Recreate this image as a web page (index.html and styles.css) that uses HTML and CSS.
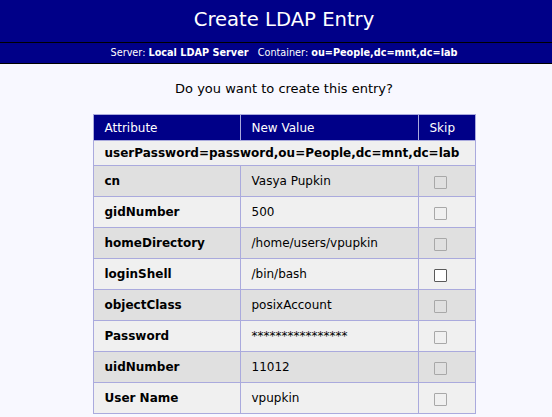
FILE: index.html
```html
<!DOCTYPE html>
<html>
<head>
<meta charset="utf-8">
<link rel="stylesheet" href="styles.css">
</head>
<body>
<div class="title">Create LDAP Entry</div>
<div class="subtitle">Server: <b>Local LDAP Server</b> &nbsp; Container: <b>ou=People,dc=mnt,dc=lab</b></div>
<div class="content">
  <p class="question">Do you want to create this entry?</p>
  <table class="entry">
    <thead>
      <tr><th class="c-attr">Attribute</th><th class="c-val">New Value</th><th class="c-skip">Skip</th></tr>
    </thead>
    <tbody>
      <tr class="dn"><td colspan="3">userPassword=password,ou=People,dc=mnt,dc=lab</td></tr>
      <tr class="dark"><td class="attr">cn</td><td>Vasya Pupkin</td><td class="skip"><input type="checkbox" disabled></td></tr>
      <tr class="light"><td class="attr">gidNumber</td><td>500</td><td class="skip"><input type="checkbox" disabled></td></tr>
      <tr class="dark"><td class="attr">homeDirectory</td><td>/home/users/vpupkin</td><td class="skip"><input type="checkbox" disabled></td></tr>
      <tr class="light"><td class="attr">loginShell</td><td>/bin/bash</td><td class="skip"><input type="checkbox"></td></tr>
      <tr class="dark"><td class="attr">objectClass</td><td>posixAccount</td><td class="skip"><input type="checkbox" disabled></td></tr>
      <tr class="light"><td class="attr">Password</td><td class="pw">****************</td><td class="skip"><input type="checkbox" disabled></td></tr>
      <tr class="dark"><td class="attr">uidNumber</td><td>11012</td><td class="skip"><input type="checkbox" disabled></td></tr>
      <tr class="light"><td class="attr">User Name</td><td>vpupkin</td><td class="skip"><input type="checkbox" disabled></td></tr>
    </tbody>
  </table>
</div>
</body>
</html>
```
FILE: styles.css
```css
html, body {
  margin: 0;
  padding: 0;
  background: #f8f8ff;
  font-family: "DejaVu Sans", sans-serif;
  color: #000;
}
.title {
  background: #000088;
  color: #fff;
  font-size: 19.6px;
  height: 42px;
  line-height: 40px;
  text-align: center;
  padding-left: 16px;
  border-bottom: 1px solid #000;
}
.subtitle {
  background: #000088;
  color: #fff;
  font-size: 9.7px;
  height: 20px;
  line-height: 20px;
  text-align: center;
  padding-left: 16px;
  border-bottom: 1px solid #000;
}
.content {
  padding-left: 16px;
}
.question {
  margin: 0;
  padding-top: 17px;
  height: 33px;
  font-size: 13px;
  text-align: center;
  line-height: 15px;
}
.entry {
  margin: 0 auto;
  border-collapse: collapse;
  font-size: 12px;
  width: 382px;
  table-layout: fixed;
}
.entry th {
  background: #000088;
  color: #fff;
  font-weight: normal;
  text-align: left;
  height: 25px;
  padding: 0 0 0 11px;
  border: 1px solid #aaaadd;
  line-height: 14px;
}
.c-attr { width: 135px; }
.c-val { width: 166px; }
.c-skip { width: 45px; }
.entry td {
  border: 1px solid #aaaadd;
  height: 30px;
  padding: 0 0 0 11px;
  line-height: 14px;
}
.entry .dn td {
  background: #f0f0f0;
  font-weight: bold;
  height: 24px;
}
.entry tr.dark td { background: #e0e0e0; }
.entry tr.light td { background: #f0f0f0; }
.entry td.attr { font-weight: bold; }
.entry td.skip { padding: 0 0 0 15px; }
.entry td.skip input {
  appearance: none;
  -webkit-appearance: none;
  display: block;
  margin: 3px 0 0 0;
  width: 13px;
  height: 13px;
  box-sizing: border-box;
  border: 1px solid #a8a8a8;
  border-radius: 1px;
  background: transparent;
}
.entry td.skip input:not(:disabled) {
  border-color: #5a5a5a;
  background: #fff;
}
```
